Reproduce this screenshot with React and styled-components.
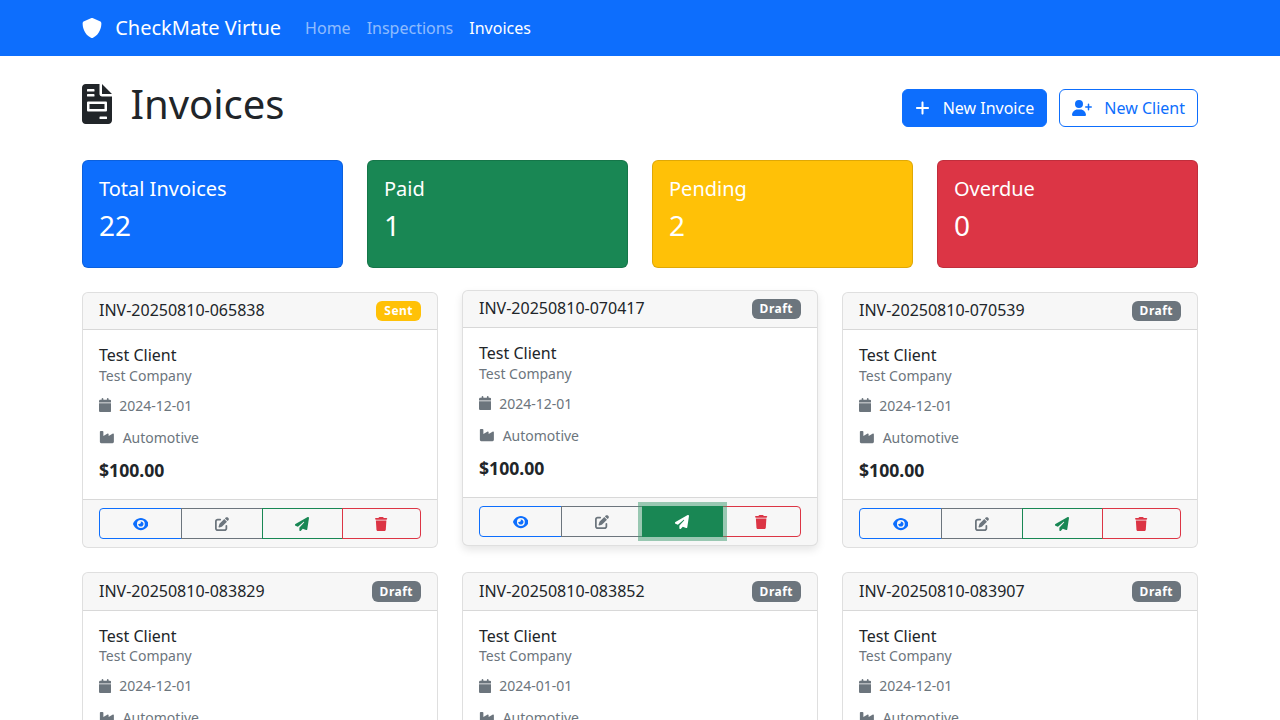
import React from "react";
import styled, { createGlobalStyle } from "styled-components";
import {
  FaShield, FaPlus, FaUserPlus, FaCalendar, FaIndustry,
  FaEye, FaPenToSquare, FaPaperPlane, FaTrash,
} from "react-icons/fa6";

const Global = createGlobalStyle`
  *, *::before, *::after { box-sizing: border-box; }
  html, body { margin: 0; overflow: hidden; height: 720px; }
  body {
    font-family: "Noto Sans", sans-serif;
    font-size: 16px;
    line-height: 1.5;
    color: #212529;
    background: #fff;
  }
  svg { height: 1em; fill: currentColor; flex: none; }
`;

const FileSvg = styled.svg`width: 0.75em;`;
const FileIcon = () => (
  <FileSvg viewBox="0 0 384 512">
    <path d="M256 0v128h128L256 0zM224 128L224 0H48C21.49 0 0 21.49 0 48v416C0 490.5 21.49 512 48 512h288c26.51 0 48-21.49 48-48V160h-127.1C238.3 160 224 145.7 224 128zM64 72C64 67.63 67.63 64 72 64h80C156.4 64 160 67.63 160 72v16C160 92.38 156.4 96 152 96h-80C67.63 96 64 92.38 64 88V72zM64 136C64 131.6 67.63 128 72 128h80C156.4 128 160 131.6 160 136v16C160 156.4 156.4 160 152 160h-80C67.63 160 64 156.4 64 152V136zM320 440c0 4.375-3.625 8-8 8h-80C227.6 448 224 444.4 224 440v-16c0-4.375 3.625-8 8-8h80c4.375 0 8 3.625 8 8V440zM320 240v96c0 8.875-7.125 16-16 16h-224C71.13 352 64 344.9 64 336v-96C64 231.1 71.13 224 80 224h224C312.9 224 320 231.1 320 240zM288 256H96v64h192V256z" />
  </FileSvg>
);
const ShieldIcon = styled(FaShield)`width: 1em;`;
const PlusIcon = styled(FaPlus)`width: 15px;`;
const UserPlusIcon = styled(FaUserPlus)`width: 1.25em;`;
const CalendarIcon = styled(FaCalendar)`width: 0.875em;`;
const IndustryIcon = styled(FaIndustry)`width: 1.125em;`;
const EyeIcon = styled(FaEye)`width: 1.125em;`;
const EditIcon = styled(FaPenToSquare)`width: 1em;`;
const PlaneIcon = styled(FaPaperPlane)`width: 1em; margin-right: 1px;`;
const TrashIcon = styled(FaTrash)`width: 0.875em;`;

const Navbar = styled.nav`
  height: 56px;
  background: #0d6efd;
  display: flex;
  align-items: center;
`;
const Container = styled.div`
  width: 1140px;
  margin: 0 auto;
  padding: 0 12px;
`;
const NavInner = styled(Container)`
  display: flex;
  align-items: center;
`;
const Brand = styled.a`
  font-size: 20px;
  color: #fff;
  margin-right: 24px;
  display: flex;
  align-items: center;
  gap: 13.2px;
`;
const NavLinks = styled.div`
  display: flex;
  gap: 16px;
`;
const NavLink = styled.a`
  color: ${(p) => (p.$active ? "#fff" : "rgba(255,255,255,.55)")};
`;
const Main = styled(Container)`
  margin-top: 24px;
`;
const PageHead = styled.div`
  display: flex;
  justify-content: space-between;
  align-items: center;
  height: 56px;
  margin-bottom: 24px;
`;
const Title = styled.h1`
  margin: 0 0 8px;
  font-size: 40px;
  font-weight: 400;
  line-height: 48px;
  display: flex;
  align-items: center;
  gap: 18.4px;
`;
const Actions = styled.div`
  display: flex;
  gap: 12px;
`;
const Button = styled.a`
  height: 38px;
  padding: 0 12px;
  border: 1px solid #0d6efd;
  border-radius: 6px;
  display: flex;
  align-items: center;
  gap: 12.16px;
  background: ${(p) => (p.$solid ? "#0d6efd" : "#fff")};
  color: ${(p) => (p.$solid ? "#fff" : "#0d6efd")};
`;
const StatRow = styled.div`
  display: grid;
  grid-template-columns: repeat(4, 1fr);
  gap: 24px;
  margin-bottom: 24px;
`;
const StatCard = styled.div`
  padding: 16px 16px 24px;
  border: 1px solid rgba(0, 0, 0, 0.125);
  border-radius: 6px;
  background: ${(p) => p.$bg};
  color: #fff;
`;
const StatLabel = styled.h5`
  margin: 0 0 8px;
  font-size: 20px;
  font-weight: 400;
  line-height: 24px;
`;
const StatValue = styled.div`
  font-size: 28px;
  line-height: 33.6px;
`;
const CardGrid = styled.div`
  display: grid;
  grid-template-columns: repeat(3, 1fr);
  gap: 24px;
`;
const Card = styled.article`
  background: #fff;
  border: 1px solid rgba(0, 0, 0, 0.125);
  border-radius: 6px;
  transform: ${(p) => (p.$raised ? "translateY(-2px)" : "none")};
  box-shadow: ${(p) => (p.$raised ? "0 4px 8px rgba(0,0,0,.1)" : "none")};
`;
const CardHeader = styled.header`
  display: flex;
  justify-content: space-between;
  align-items: center;
  padding: 8px 16px;
  background: rgba(0, 0, 0, 0.03);
  border-bottom: 1px solid rgba(0, 0, 0, 0.125);
  border-radius: 5px 5px 0 0;
`;
const InvoiceNo = styled.h6`
  margin: 0;
  font-size: 16px;
  font-weight: 400;
  line-height: 19.2px;
`;
const Badge = styled.span`
  font-size: 12px;
  font-weight: 700;
  line-height: 12px;
  letter-spacing: 0.5px;
  padding: 4.8px 7.95px 3.6px;
  border-radius: 6px;
  color: #fff;
  background: ${(p) => p.$bg};
`;
const CardBody = styled.div`
  padding: 16px;
`;
const ClientName = styled.h6`
  margin: 0;
  font-size: 16px;
  font-weight: 400;
  line-height: 18.8px;
`;
const Company = styled.div`
  font-size: 14px;
  line-height: 21px;
  color: #6c757d;
  margin-bottom: 7.4px;
`;
const Meta = styled.div`
  display: flex;
  align-items: center;
  gap: 7.9px;
  height: 24px;
  margin-bottom: 8px;
  font-size: 14px;
  color: #6c757d;
`;
const Price = styled.div`
  font-size: 17.6px;
  font-weight: 700;
  line-height: 26px;
`;
const CardFooter = styled.footer`
  padding: 8px 16px;
  background: rgba(0, 0, 0, 0.03);
  border-top: 1px solid rgba(0, 0, 0, 0.125);
  border-radius: 0 0 5px 5px;
`;
const BtnGroup = styled.div`
  display: grid;
  grid-template-columns: 82fr 81fr 80fr 79fr;
`;
const IconBtn = styled.button`
  height: 31px;
  padding: 0;
  margin-right: -1px;
  font-size: 14px;
  line-height: 1;
  border: 1px solid ${(p) => p.$color};
  background: ${(p) => (p.$active ? p.$color : "transparent")};
  color: ${(p) => (p.$active ? "#fff" : p.$color)};
  position: relative;
  z-index: ${(p) => (p.$active ? 2 : 0)};
  box-shadow: ${(p) => (p.$active ? "0 0 0 4px rgba(60,153,110,.5)" : "none")};
  display: flex;
  align-items: center;
  justify-content: center;
  &:first-child {
    border-radius: 4px 0 0 4px;
  }
  &:last-child {
    margin-right: 0;
    border-radius: 0 4px 4px 0;
  }
`;

const invoices = [
  { no: "INV-20250810-065838", status: "Sent", date: "2024-12-01" },
  { no: "INV-20250810-070417", status: "Draft", date: "2024-12-01", raised: true },
  { no: "INV-20250810-070539", status: "Draft", date: "2024-12-01" },
  { no: "INV-20250810-083829", status: "Draft", date: "2024-12-01" },
  { no: "INV-20250810-083852", status: "Draft", date: "2024-01-01" },
  { no: "INV-20250810-083907", status: "Draft", date: "2024-12-01" },
];
const stats = [
  ["Total Invoices", "22", "#0d6efd"],
  ["Paid", "1", "#198754"],
  ["Pending", "2", "#ffc107"],
  ["Overdue", "0", "#dc3545"],
];

export default function App() {
  return (
    <>
      <Global />
      <Navbar>
        <NavInner>
          <Brand><ShieldIcon />CheckMate Virtue</Brand>
          <NavLinks>
            <NavLink>Home</NavLink>
            <NavLink>Inspections</NavLink>
            <NavLink $active>Invoices</NavLink>
          </NavLinks>
        </NavInner>
      </Navbar>
      <Main>
        <PageHead>
          <Title><FileIcon />Invoices</Title>
          <Actions>
            <Button $solid><PlusIcon />New Invoice</Button>
            <Button><UserPlusIcon />New Client</Button>
          </Actions>
        </PageHead>
        <StatRow>
          {stats.map(([label, value, bg]) => (
            <StatCard key={label} $bg={bg}>
              <StatLabel>{label}</StatLabel>
              <StatValue>{value}</StatValue>
            </StatCard>
          ))}
        </StatRow>
        <CardGrid>
          {invoices.map((inv) => (
            <Card key={inv.no} $raised={inv.raised}>
              <CardHeader>
                <InvoiceNo>{inv.no}</InvoiceNo>
                <Badge $bg={inv.status === "Sent" ? "#ffc107" : "#6c757d"}>{inv.status}</Badge>
              </CardHeader>
              <CardBody>
                <ClientName>Test Client</ClientName>
                <Company>Test Company</Company>
                <Meta><CalendarIcon />{inv.date}</Meta>
                <Meta><IndustryIcon />Automotive</Meta>
                <Price>$100.00</Price>
              </CardBody>
              <CardFooter>
                <BtnGroup>
                  <IconBtn $color="#0d6efd"><EyeIcon /></IconBtn>
                  <IconBtn $color="#6c757d"><EditIcon /></IconBtn>
                  <IconBtn $color="#198754" $active={inv.raised}><PlaneIcon /></IconBtn>
                  <IconBtn $color="#dc3545"><TrashIcon /></IconBtn>
                </BtnGroup>
              </CardFooter>
            </Card>
          ))}
        </CardGrid>
      </Main>
    </>
  );
}
